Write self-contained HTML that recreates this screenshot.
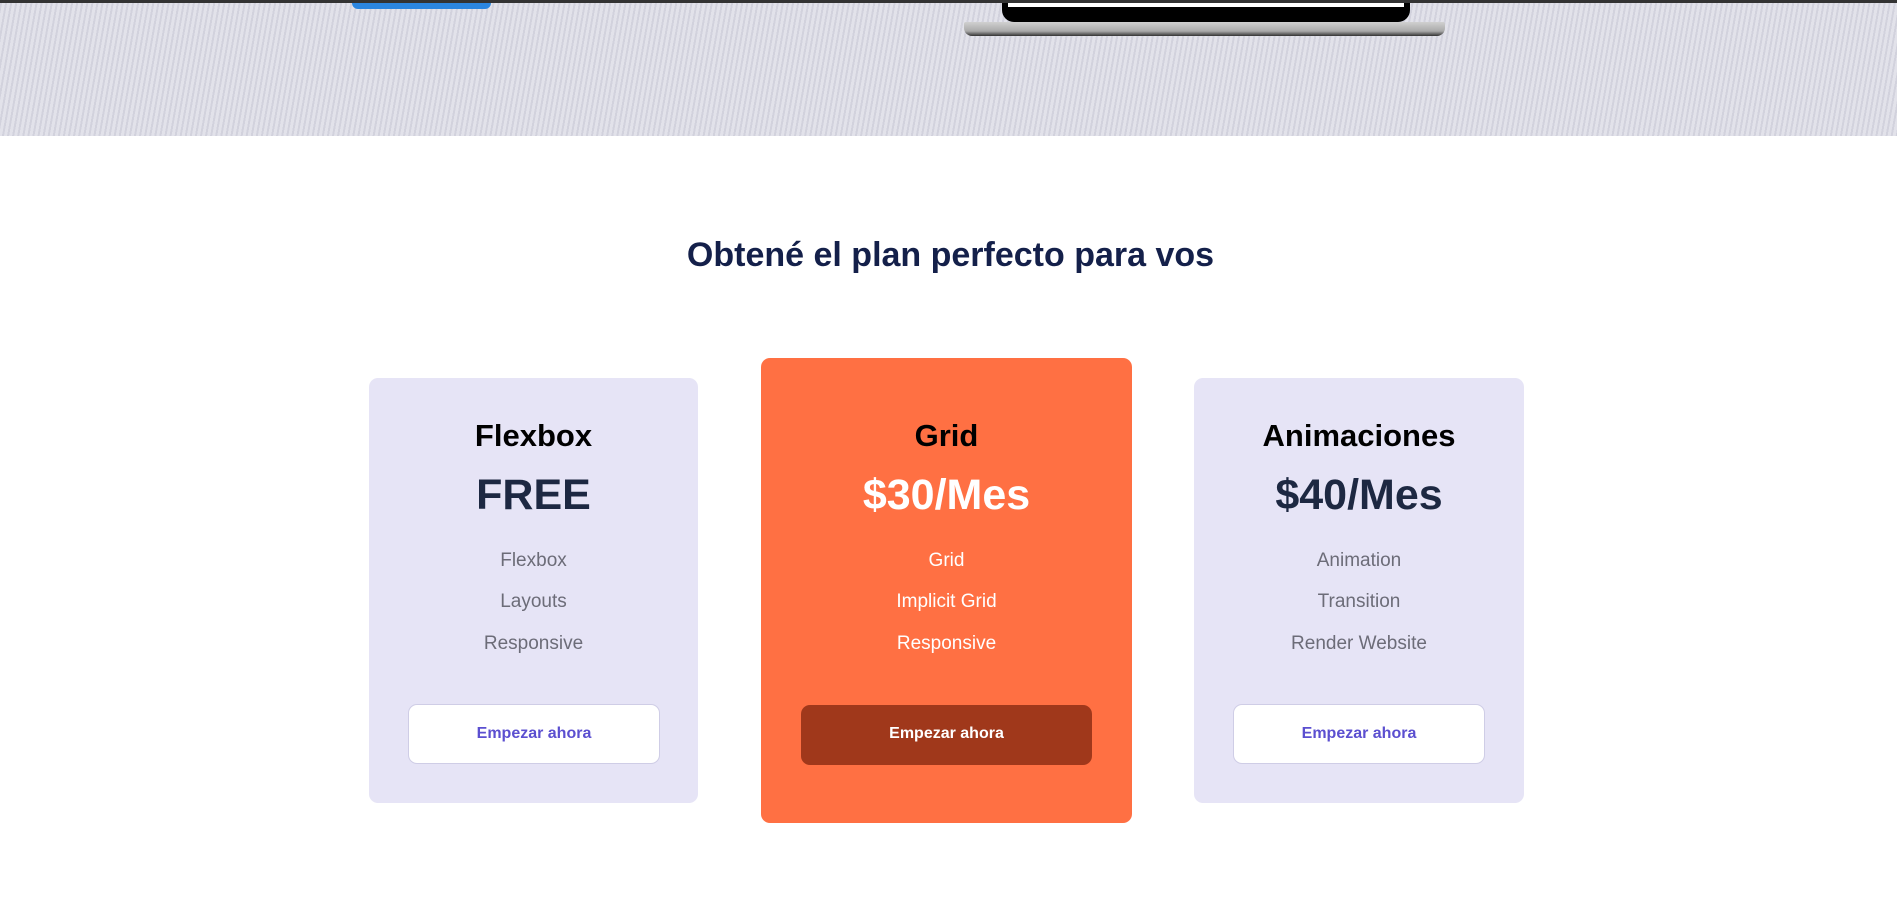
<!DOCTYPE html>
<html><head><meta charset="utf-8"><style>
*{margin:0;padding:0;box-sizing:border-box}
body{width:1901px;height:921px;background:#fff;font-family:"Liberation Sans",sans-serif;position:relative;overflow:hidden}
.hero{position:absolute;left:0;top:0;width:1897px;height:136px;background:#d9d9e3;
background-image:repeating-linear-gradient(100deg,#d2d2dd 0 2px,#e2e2ea 2px 5px);border-top:3px solid #333}
.pill{position:absolute;left:352px;top:0;width:139px;height:6px;background:#2b86e0;border-radius:0 0 6px 6px}
.lap{position:absolute;left:1002px;top:0;width:408px;height:19px;background:#000;border-radius:0 0 12px 12px}
.lap i{position:absolute;left:6px;top:0;right:6px;height:4px;background:#fff}
.base{position:absolute;left:964px;top:19px;width:481px;height:14px;background:linear-gradient(#d0d0d0,#aaa 65%,#333);border-radius:2px 2px 8px 8px}
h2{position:absolute;top:236px;left:0;width:1901px;text-align:center;font-size:34px;color:#14204a;font-weight:bold}
.card{position:absolute;background:#e6e4f6;border-radius:9px;text-align:center}
.t{position:absolute;width:100%;font-size:31px;font-weight:bold;color:#000}
.p{position:absolute;width:100%;font-size:43px;font-weight:bold;color:#1d2842}
.f{position:absolute;width:100%;font-size:19px;color:#6c6c78}
.b{position:absolute;height:60px;border-radius:9px;background:#fff;border:1px solid #cfcde6;color:#5b4fd0;font-weight:bold;font-size:16px;line-height:58px;text-align:center}
</style></head><body>
<div class="hero"><div class="pill"></div><div class="lap"><i></i></div><div class="base"></div></div>
<h2>Obtené el plan perfecto para vos</h2>

<div class="card" style="left:369px;top:378px;width:329px;height:425px">
<div class="t" style="top:40px">Flexbox</div>
<div class="p" style="top:93px">FREE</div>
<div class="f" style="top:172px">Flexbox</div>
<div class="f" style="top:213px">Layouts</div>
<div class="f" style="top:255px">Responsive</div>
<div class="b" style="left:39px;top:326px;width:252px">Empezar ahora</div>
</div>

<div class="card" style="left:761px;top:358px;width:371px;height:465px;background:#ff7043">
<div class="t" style="top:60px">Grid</div>
<div class="p" style="top:113px;color:#fff">$30/Mes</div>
<div class="f" style="top:192px;color:#fff">Grid</div>
<div class="f" style="top:233px;color:#fff">Implicit Grid</div>
<div class="f" style="top:275px;color:#fff">Responsive</div>
<div class="b" style="left:40px;top:347px;width:291px;background:#a0381b;border:none;color:#fff;line-height:58px">Empezar ahora</div>
</div>

<div class="card" style="left:1194px;top:378px;width:330px;height:425px">
<div class="t" style="top:40px">Animaciones</div>
<div class="p" style="top:93px">$40/Mes</div>
<div class="f" style="top:172px">Animation</div>
<div class="f" style="top:213px">Transition</div>
<div class="f" style="top:255px">Render Website</div>
<div class="b" style="left:39px;top:326px;width:252px">Empezar ahora</div>
</div>
</body></html>
